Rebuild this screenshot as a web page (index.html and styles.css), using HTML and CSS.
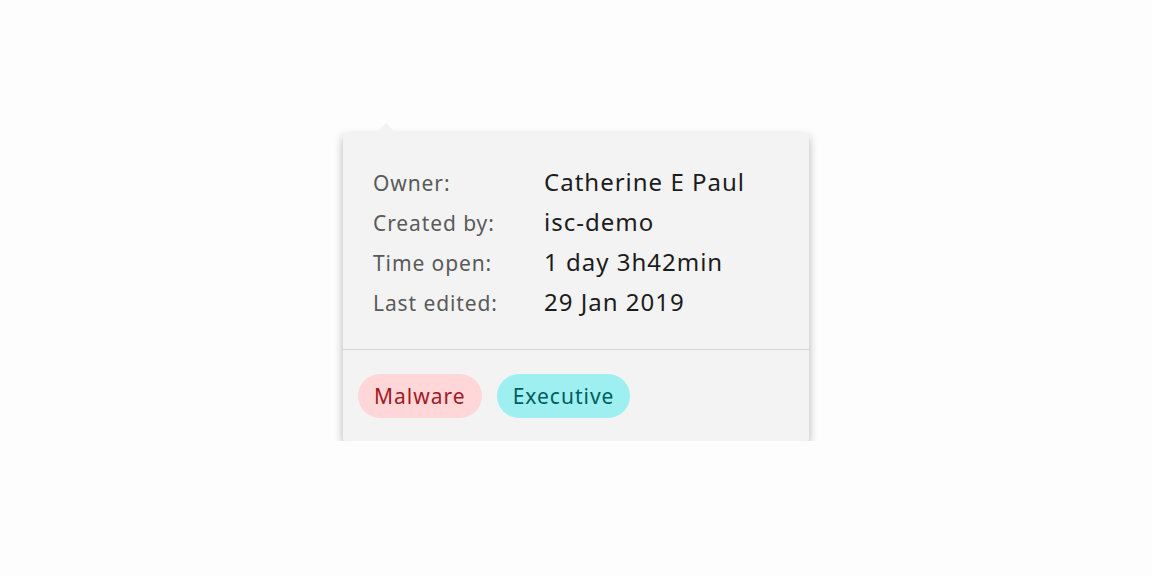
FILE: index.html
```html
<!DOCTYPE html>
<html lang="en">
<head>
    <meta charset="UTF-8">
    <meta name="viewport" content="width=device-width, initial-scale=1.0">
    <title>Case details</title>
    <link rel="stylesheet" href="styles.css">
</head>
<body>
    <div class="stage">
        <div class="popover">
            <div class="details">
                <div class="row">
                    <span class="label">Owner:</span>
                    <span class="value">Catherine E Paul</span>
                </div>
                <div class="row">
                    <span class="label">Created by:</span>
                    <span class="value">isc-demo</span>
                </div>
                <div class="row">
                    <span class="label">Time open:</span>
                    <span class="value">1 day 3h42min</span>
                </div>
                <div class="row">
                    <span class="label">Last edited:</span>
                    <span class="value">29 Jan 2019</span>
                </div>
            </div>
            <div class="tags">
                <span class="tag tag-red">Malware</span>
                <span class="tag tag-teal">Executive</span>
            </div>
        </div>
    </div>
</body>
</html>
```

FILE: styles.css
```css
body {
    margin: 0;
    padding: 0;
    background-color: #fdfdfd;
    font-family: "Noto Sans", "Open Sans", sans-serif;
}
.stage {
    padding: 133px 0 0 343px;
}
.popover {
    position: relative;
    width: 466px;
    background: #f3f3f3;
    border-radius: 2px;
    box-shadow: 0 4px 10px rgba(0, 0, 0, 0.3);
}
.popover::before {
    content: "";
    position: absolute;
    top: -10px;
    left: 33px;
    border-left: 10px solid transparent;
    border-right: 10px solid transparent;
    border-bottom: 10px solid #f3f3f3;
}
.details {
    padding: 29px 30px 27px 30px;
    border-bottom: 1px solid #d6d6d6;
}
.row {
    display: flex;
    align-items: baseline;
    height: 40px;
    line-height: 40px;
}
.label {
    width: 171px;
    font-size: 21px;
    color: #5a5a5a;
    letter-spacing: 0.9px;
}
.value {
    font-size: 24px;
    color: #1c1c1c;
    letter-spacing: 1px;
}
.tags {
    display: flex;
    gap: 15px;
    padding: 24px 15px 23px 15px;
}
.tag {
    height: 44px;
    line-height: 44px;
    padding: 0 16px;
    border-radius: 22px;
    font-size: 21px;
    letter-spacing: 1px;
}
.tag-red {
    background: #ffd7d9;
    color: #a2191f;
}
.tag-teal {
    background: #9ef0f0;
    color: #005d5d;
}
```
